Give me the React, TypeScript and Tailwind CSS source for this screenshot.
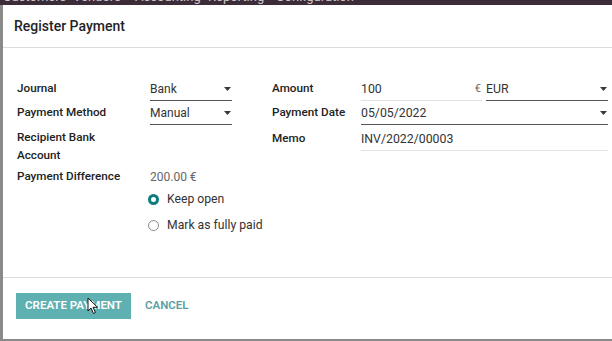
import React from "react";

const Caret = () => (
  <svg width="7" height="4" viewBox="0 0 7 4" className="shrink-0">
    <path d="M0 0 L7 0 L3.5 4 Z" fill="#3a3a3a" />
  </svg>
);

export default function App() {
  const font = { fontFamily: "Roboto, 'Liberation Sans', sans-serif" };
  return (
    <div className="w-[612px] h-[341px] overflow-hidden bg-[#8a8a8a] flex flex-col" style={font}>
      {/* navbar behind, mostly hidden */}
      <div className="h-[5px] shrink-0 bg-[#3c2c38] overflow-hidden relative">
        <div className="flex text-[13px] text-[#cfc6cc] leading-[14px] -mt-[10px] pl-[3px]">
          <span className="w-[70px]">Customers</span>
          <span className="w-[62px]">Vendors</span>
          <span className="w-[73px]">Accounting</span>
          <span className="w-[68px]">Reporting</span>
          <span>Configuration</span>
        </div>
      </div>
      <div className="flex-1 flex pl-[3px] pb-[2px] min-h-0">
        <div className="flex-1 bg-white flex flex-col relative">
          {/* header */}
          <div className="h-[43px] shrink-0 border-b border-[#dcdcdc] flex items-center pl-[11px]">
            <span className="text-[14px] font-medium text-[#1f2328]">Register Payment</span>
          </div>
          {/* body */}
          <div className="flex-1 pt-[29px] pl-[14px] flex text-[11.7px]">
            {/* left group */}
            <div className="w-[255px] flex flex-col">
              <div className="flex items-center h-[24px]">
                <div className="w-[133px] font-medium text-[#222]">Journal</div>
                <div className="w-[82px] h-[22px] mt-[1px] border-b border-[#555] flex items-center justify-between pr-[1px] text-[12px] text-[#333]">
                  <span>Bank</span>
                  <Caret />
                </div>
              </div>
              <div className="flex items-center h-[24px]">
                <div className="w-[133px] font-medium text-[#222]">Payment Method</div>
                <div className="w-[82px] h-[22px] mt-[1px] border-b border-[#555] flex items-center justify-between pr-[1px] text-[12px] text-[#333]">
                  <span>Manual</span>
                  <Caret />
                </div>
              </div>
              <div className="flex pt-[3px]">
                <div className="w-[133px] font-medium text-[#222] leading-[18px]">
                  Recipient Bank
                  <br />
                  Account
                </div>
              </div>
              <div className="flex items-center h-[22px] mt-[2px]">
                <div className="w-[133px] font-medium text-[#222]">Payment Difference</div>
                <div className="text-[12px] text-[#666]">200.00 €</div>
              </div>
              <div className="flex flex-col pl-[131px] text-[12.2px] text-[#333]">
                <div className="flex items-center h-[22px] gap-[8px]">
                  <span className="w-[11px] h-[11px] rounded-full border-[3.5px] border-[#0f7c80] bg-white" />
                  <span>Keep open</span>
                </div>
                <div className="flex items-center h-[26px] mt-[2px] gap-[8px]">
                  <span className="w-[11px] h-[11px] rounded-full border border-[#8a8a8a] bg-white" />
                  <span>Mark as fully paid</span>
                </div>
              </div>
            </div>
            {/* right group */}
            <div className="flex-1 flex flex-col">
              <div className="flex items-center h-[24px]">
                <div className="w-[89px] font-medium text-[#222]">Amount</div>
                <div className="w-[121px] h-[22px] mt-[1px] border-b border-[#e2e2e2] flex items-center justify-between text-[12.3px] text-[#333]">
                  <span>100</span>
                  <span className="text-[11px] text-[#666] pr-[1px]">€</span>
                </div>
                <div className="w-[122px] ml-[4px] h-[22px] mt-[1px] border-b border-[#555] flex items-center justify-between pr-[1px] text-[12.3px] text-[#333]">
                  <span>EUR</span>
                  <Caret />
                </div>
              </div>
              <div className="flex items-center h-[24px]">
                <div className="w-[89px] font-medium text-[#222]">Payment Date</div>
                <div className="w-[247px] h-[22px] mt-[1px] border-b border-[#555] flex items-center justify-between pr-[1px] text-[12.3px] text-[#333]">
                  <span>05/05/2022</span>
                  <Caret />
                </div>
              </div>
              <div className="flex items-center h-[24px] mt-[2px]">
                <div className="w-[89px] font-medium text-[#222]">Memo</div>
                <div className="w-[247px] h-[22px] mt-[1px] border-b border-[#e2e2e2] flex items-center text-[12.3px] text-[#333]">
                  <span>INV/2022/00003</span>
                </div>
              </div>
            </div>
          </div>
          {/* footer */}
          <div className="h-[62px] shrink-0 border-t border-[#dcdcdc] flex items-center pl-[13px] gap-[14px] pb-[6px]">
            <div className="h-[26px] w-[115px] bg-[#5fb0b1] text-white text-[11.5px] font-semibold flex items-center justify-center">
              CREATE PAYMENT
            </div>
            <div className="text-[11.5px] font-semibold text-[#5b9fa6]">CANCEL</div>
          </div>
          {/* mouse cursor */}
          <svg className="absolute left-[84px] top-[292px]" width="12" height="18" viewBox="0 0 12 18">
            <path d="M1 1 L1 14 L4 11 L6.5 16.5 L8.5 15.5 L6 10.3 L10.5 10.3 Z" fill="#fff" stroke="#111" strokeWidth="1" strokeLinejoin="round" />
          </svg>
        </div>
      </div>
    </div>
  );
}
